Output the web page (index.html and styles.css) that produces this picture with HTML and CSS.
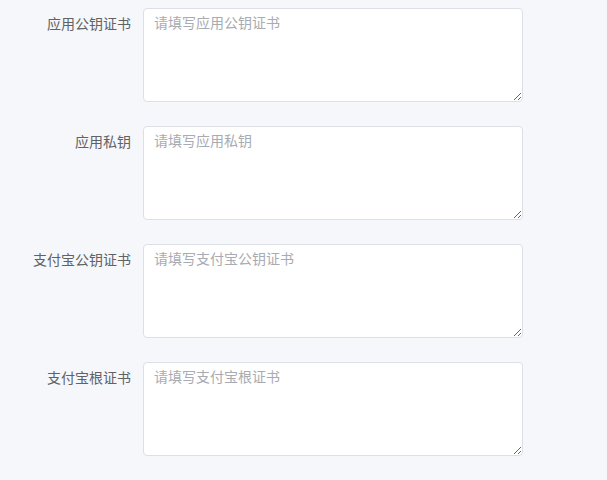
FILE: index.html
```html
<!DOCTYPE html>
<html>
<head>
    <meta charset="utf-8">
    <title>支付配置</title>
    <link rel="stylesheet" href="styles.css">
</head>
<body>

<form class="config-form">
    <div class="form-item">
        <label class="form-label">应用公钥证书</label>
        <div class="form-content">
            <textarea class="form-textarea" placeholder="请填写应用公钥证书"></textarea>
        </div>
    </div>
    <div class="form-item">
        <label class="form-label">应用私钥</label>
        <div class="form-content">
            <textarea class="form-textarea" placeholder="请填写应用私钥"></textarea>
        </div>
    </div>
    <div class="form-item">
        <label class="form-label">支付宝公钥证书</label>
        <div class="form-content">
            <textarea class="form-textarea" placeholder="请填写支付宝公钥证书"></textarea>
        </div>
    </div>
    <div class="form-item">
        <label class="form-label">支付宝根证书</label>
        <div class="form-content">
            <textarea class="form-textarea" placeholder="请填写支付宝根证书"></textarea>
        </div>
    </div>
</form>

</body>
</html>
```

FILE: styles.css
```css
/* 表单页面样式 */
body {
    margin: 0;
    background-color: #f5f7fa;
    font-family: "Liberation Sans", "Noto Sans CJK SC", sans-serif;
    font-size: 14px;
    color: #606266;
}

.config-form {
    padding-top: 8px;
}

.form-item {
    display: flex;
    margin-bottom: 24px;
}

.form-label {
    width: 143px;
    box-sizing: border-box;
    padding-right: 12px;
    text-align: right;
    line-height: 32px;
    color: #606266;
}

.form-content {
    width: 380px;
}

.form-textarea {
    display: block;
    width: 100%;
    height: 94px;
    box-sizing: border-box;
    padding: 4px 10px 5px;
    border: 1px solid #dcdfe6;
    border-radius: 4px;
    background-color: #fff;
    font-family: inherit;
    font-size: 14px;
    line-height: 1.5;
    color: #606266;
    resize: vertical;
    outline: none;
}

.form-textarea::placeholder {
    color: #a8abb2;
}
```
